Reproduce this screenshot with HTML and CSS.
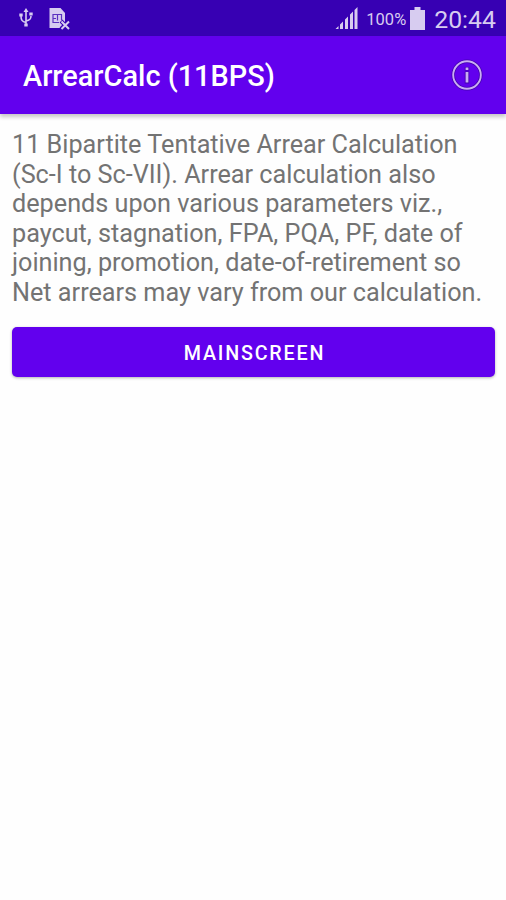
FILE: index.html
```html
<!DOCTYPE html>
<html lang="en">
<head>
    <meta charset="UTF-8">
    <meta name="viewport" content="width=device-width, initial-scale=1.0">
    <title>ArrearCalc (11BPS)</title>
    <link rel="stylesheet" href="styles.css">
</head>
<body>
    <div class="status-bar">
        <div class="status-left">
            <svg class="icon-usb" width="16" height="20" viewBox="0 0 16 20" fill="none" stroke="currentColor" stroke-width="1.6">
                <path d="M8 3v14M8 14.500C4 13.500 3 12 3 8M8 13c4-1 5-2 5-5"/>
                <path d="M8 0l2.500 4h-5zM1.300 5.500h3.400v3H1.300zM11.300 4.500h3.400v3h-3.400zM6.300 15.500h3.400v3H6.300z" fill="currentColor" stroke="none"/>
            </svg>
            <svg class="icon-sim" width="21" height="22" viewBox="0 0 21 22">
                <path d="M0.500 0h11l4.500 5v15H0.500z" fill="currentColor"/>
                <path d="M4 6.500h9M4 6v9M4 14.500h6M12.500 6v6M8.500 6.500v6M4 10.500h3" fill="none" stroke="#5a30c0" stroke-width="1.2"/>
                <path d="M12 13l8 8M20 13l-8 8" stroke="#3700b3" stroke-width="4"/>
                <path d="M12.500 13.500l7.500 7.500M20 13.500l-7.500 7.500" stroke="currentColor" stroke-width="2"/>
            </svg>
        </div>
        <div class="status-right">
            <svg class="icon-signal" width="23" height="24" viewBox="0 0 23 24" fill="currentColor">
                <path d="M0.500 23l3-3v3zM5 18.500l3-3V23H5zM10 13.500l3-3V23h-3zM15 8.500l3-3V23h-3zM19.500 4l3-3v22h-3z"/>
            </svg>
            <span class="battery-text">100%</span>
            <svg class="icon-battery" width="15" height="23" viewBox="0 0 15 23" fill="currentColor">
                <path d="M4.500 0h6v3H15v20H0V3h4.500z"/>
            </svg>
            <span class="clock">20:44</span>
        </div>
    </div>

    <header class="app-bar">
        <h1>ArrearCalc (11BPS)</h1>
        <button class="info-btn" aria-label="Info">
            <svg width="32" height="32" viewBox="0 0 32 32" fill="none">
                <circle cx="16" cy="16" r="13.800" stroke="#4300ad" stroke-width="3.500"/>
                <path d="M16 8v3.500M16 12.500v12" stroke="#4300ad" stroke-width="4.500"/>
                <circle cx="16" cy="16" r="13.800" stroke="#c9adf3" stroke-width="1.900"/>
                <path d="M16 8.500v2.500M16 13v10.500" stroke="#c9adf3" stroke-width="2.800"/>
            </svg>
        </button>
    </header>

    <main class="content">
        <p>11 Bipartite Tentative Arrear Calculation<br>
        (Sc-I to Sc-VII). Arrear calculation also<br>
        depends upon various parameters viz.,<br>
        paycut, stagnation, FPA, PQA, PF, date of<br>
        joining, promotion, date-of-retirement so<br>
        Net arrears may vary from our calculation.</p>
        <button class="primary">MAINSCREEN</button>
    </main>
</body>
</html>
```

FILE: styles.css
```css
* {
    box-sizing: border-box;
}

body {
    margin: 0;
    min-height: 100vh;
    background-color: #fefefe;
    font-family: Roboto, sans-serif;
}

svg {
    display: block;
}

button {
    border: none;
    padding: 0;
    font-family: inherit;
    cursor: pointer;
}

.status-bar {
    display: flex;
    justify-content: space-between;
    height: 36px;
    padding: 0 10px 0 18px;
    background-color: #3700b3;
    color: #d7ccf0;
}

.status-left,
.status-right {
    display: flex;
    align-items: center;
}

.status-left {
    gap: 15px;
}

.icon-sim {
    margin-top: 2px;
}

.icon-signal {
    margin-right: 8px;
}

.battery-text {
    margin-right: 4px;
    padding-top: 2px;
    font-size: 16.5px;
}

.clock {
    margin-left: 9px;
    padding-top: 3px;
    font-size: 24.8px;
}

.app-bar {
    display: flex;
    justify-content: space-between;
    align-items: center;
    height: 78px;
    padding: 0 23px;
    background-color: #6200ee;
    box-shadow: 0 3px 4px rgba(0, 0, 0, 0.22);
}

.app-bar h1 {
    margin: 0;
    padding-top: 2px;
    color: #fff;
    font-size: 28.9px;
    font-weight: 500;
}

.info-btn {
    background: none;
}

.content {
    padding: 16px 11px 0 12px;
}

.content p {
    margin: 0 0 20px;
    color: #737373;
    font-size: 25.23px;
    line-height: 29.5px;
    white-space: nowrap;
}

.primary {
    display: block;
    width: 100%;
    height: 50px;
    padding: 3px 0 0 2px;
    border-radius: 5px;
    background-color: #6200ee;
    color: #fff;
    font-size: 19.7px;
    font-weight: 500;
    letter-spacing: 1.8px;
    box-shadow: 0 1px 3px rgba(0, 0, 0, 0.3);
}
```
